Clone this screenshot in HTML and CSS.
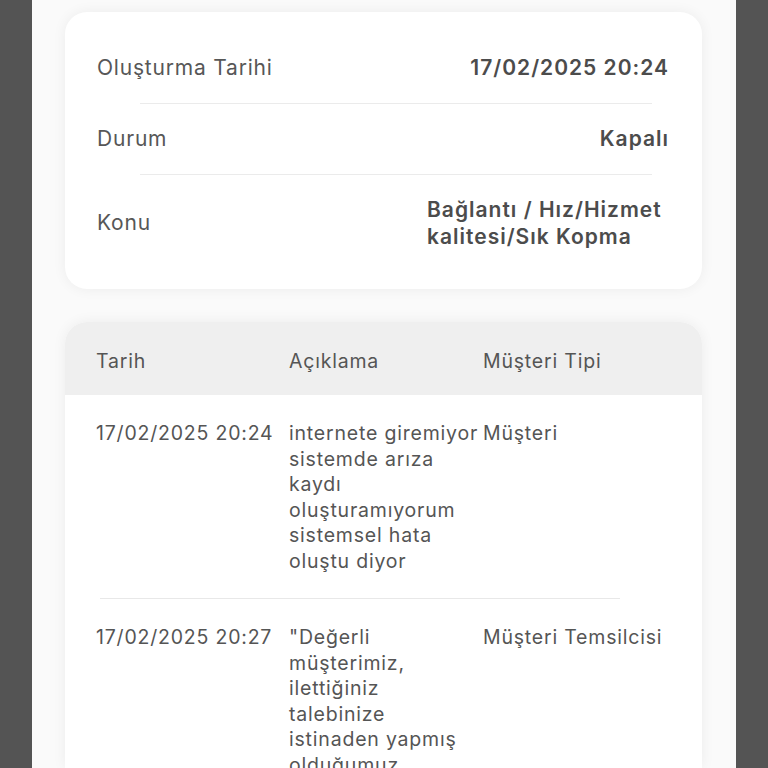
FILE: index.html
```html
<!DOCTYPE html>
<html lang="tr">
<head>
<meta charset="utf-8">
<link rel="stylesheet" href="styles.css">
</head>
<body>
<div class="frame">
  <div class="gutter"></div>
  <main class="content">
    <section class="card info">
      <div class="row">
        <span class="label">Oluşturma Tarihi</span>
        <span class="value">17/02/2025 20:24</span>
      </div>
      <div class="divider"></div>
      <div class="row">
        <span class="label">Durum</span>
        <span class="value">Kapalı</span>
      </div>
      <div class="divider"></div>
      <div class="row">
        <span class="label">Konu</span>
        <span class="value multi">Bağlantı / Hız/Hizmet kalitesi/Sık Kopma</span>
      </div>
    </section>

    <section class="card table">
      <div class="thead">
        <span>Tarih</span>
        <span class="desc">Açıklama</span>
        <span>Müşteri Tipi</span>
      </div>
      <div class="trow">
        <span>17/02/2025 20:24</span>
        <span class="desc">internete giremiyor sistemde arıza kaydı oluşturamıyorum sistemsel hata oluştu diyor</span>
        <span>Müşteri</span>
      </div>
      <div class="tdivider"></div>
      <div class="trow">
        <span>17/02/2025 20:27</span>
        <span class="desc">"Değerli müşterimiz, ilettiğiniz talebinize istinaden yapmış olduğumuz kontroller sonucunda</span>
        <span>Müşteri Temsilcisi</span>
      </div>
    </section>
  </main>
  <div class="gutter"></div>
</div>
</body>
</html>
```
FILE: styles.css
```css
html, body {
  margin: 0;
  padding: 0;
  height: 100%;
  overflow: hidden;
}
body {
  background: #545454;
  font-family: Inter, "Noto Sans", sans-serif;
  color: #555;
}
.frame {
  display: flex;
  height: 768px;
}
.gutter {
  width: 32px;
  flex: none;
  background: #545454;
}
.content {
  flex: 1;
  background: #fafafa;
  padding: 12px 34px 0 33px;
  display: flex;
  flex-direction: column;
  gap: 33px;
  overflow: hidden;
}
.card {
  background: #fff;
  border-radius: 22px;
  box-shadow: 0 0 14px rgba(0, 0, 0, 0.06);
}
.info {
  padding: 21px 33px 18px 32px;
}
.row {
  display: flex;
  justify-content: space-between;
  align-items: center;
  padding: 21px 0;
  font-size: 21px;
  line-height: 28px;
  letter-spacing: 0.8px;
}
.label {
  color: #575757;
}
.value {
  font-weight: 600;
  color: #4c4c4c;
  letter-spacing: 1px;
}
.value.multi {
  width: 242px;
  line-height: 27px;
}
.divider {
  height: 1px;
  background: #ebebeb;
  margin: 0 17px 0 43px;
}
.table {
  flex: 1;
  border-radius: 22px 22px 0 0;
  overflow: hidden;
  font-size: 19.5px;
  line-height: 25.5px;
  letter-spacing: 0.8px;
}
.thead, .trow {
  display: grid;
  grid-template-columns: 193px 194px 1fr;
  padding-left: 31px;
}
.desc {
  padding-right: 3px;
}
.thead {
  background: #efefef;
  height: 73px;
  padding-top: 6px;
  box-sizing: border-box;
  align-items: center;
}
.trow {
  padding-top: 26px;
  padding-bottom: 24px;
}
.tdivider {
  height: 1px;
  background: #e8e8e8;
  margin: 0 82px 0 35px;
}
```
